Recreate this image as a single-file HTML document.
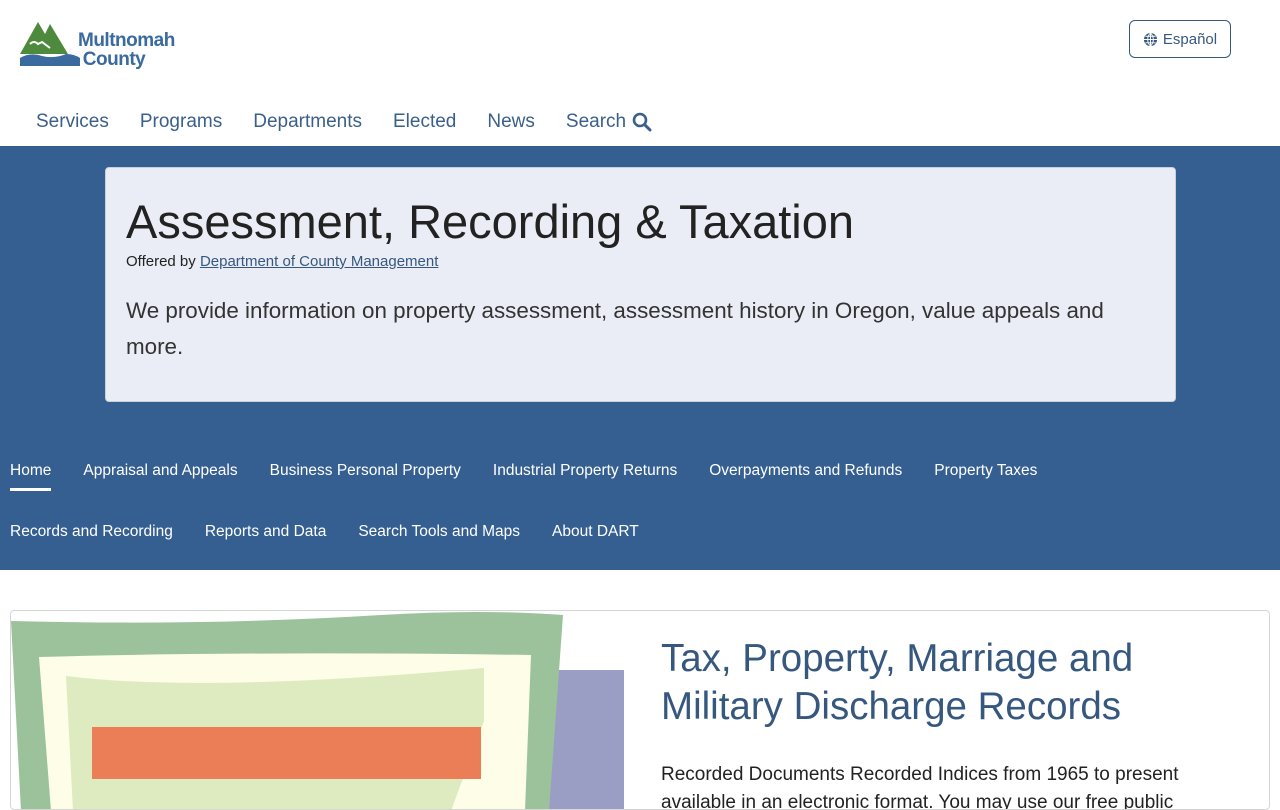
<!DOCTYPE html>
<html><head><meta charset="utf-8"><style>
*{box-sizing:border-box;margin:0;padding:0}
body{width:1280px;height:800px;overflow:hidden;font-family:"Liberation Sans",sans-serif;background:#fff;color:#222}
.top{position:relative;height:146px}
.logo{position:absolute;left:20px;top:20px}
.logo .t{position:absolute;left:58px;top:11px;color:#3a6a9e;font-weight:bold;font-size:19px;line-height:19px;letter-spacing:-0.5px}
.esp{position:absolute;left:1129px;top:20px;width:102px;height:38px;border:1px solid #36587f;border-radius:6px;color:#36587f;font-size:15px;display:flex;align-items:center;justify-content:center;gap:5px}
.nav{position:absolute;left:36px;top:111px;display:flex;font-size:19px;color:#3a5f8a}
.nav span{margin-right:31px}
.banner{background:#355f91;height:424px;position:relative}
.panel{position:absolute;left:105px;top:21px;width:1071px;height:235px;background:#eaedf5;border:1px solid #c9d0dc;border-radius:4px;padding:26px 20px}
.panel h1{font-weight:normal;font-size:47px;color:#222;line-height:56px}
.panel .off{font-size:15px;margin-top:3px}
.panel .off a{color:#36587f}
.panel p{font-size:22.4px;line-height:36px;margin-top:23px;color:#333}
.sub{position:absolute;left:10px;color:#fff;font-size:15.5px;display:flex}
.sub span{margin-right:32px}
.home{border-bottom:3px solid #fff;padding-bottom:8px}
.card{position:absolute;left:10px;top:610px;width:1260px;height:200px;border:1px solid #d5d5d5;border-radius:4px;overflow:hidden}
.card h2{position:absolute;left:650px;top:24px;font-weight:normal;font-size:38.5px;line-height:48px;color:#36587f}
.card p{position:absolute;left:650px;top:150px;font-size:19px;line-height:28px;color:#222;width:580px}
</style></head><body>
<div class="top">
 <div class="logo">
  <svg width="62" height="48" viewBox="0 0 62 48">
   <path d="M0 34 L18 2 L25 14 L30 4 L48 34 Z" fill="#4e8a3d"/>
   <path d="M10 24 Q14 20 18 24 L22 22 L30 28" stroke="#fff" stroke-width="2" fill="none"/>
   <path d="M0 38 Q10 32 22 36 Q34 39 46 34 Q54 34 60 38 L60 46 L0 46 Z" fill="#3a6a9e"/>
  </svg>
  <div class="t">Multnomah<br>&nbsp;County</div>
 </div>
 <div class="esp"><svg width="15" height="15" viewBox="0 0 16 16"><circle cx="8" cy="8" r="7" fill="#36587f"/><path d="M1 8h14M8 1v14M8 1c-4 4-4 10 0 14M8 1c4 4 4 10 0 14M2.5 4.5h11M2.5 11.5h11" stroke="#fff" stroke-width="1" fill="none"/></svg>Español</div>
 <div class="nav"><span>Services</span><span>Programs</span><span>Departments</span><span>Elected</span><span>News</span><span style="display:flex;align-items:center;gap:6px">Search <svg width="20" height="20" viewBox="0 0 20 20"><circle cx="8" cy="8" r="6" stroke="#3a5f8a" stroke-width="2.6" fill="none"/><path d="M12.5 12.5L18 18" stroke="#3a5f8a" stroke-width="3" stroke-linecap="round"/></svg></span></div>
</div>
<div class="banner">
 <div class="panel">
  <h1>Assessment, Recording &amp; Taxation</h1>
  <div class="off">Offered by <a href="#">Department of County Management</a></div>
  <p>We provide information on property assessment, assessment history in Oregon, value appeals and more.</p>
 </div>
 <div class="sub" style="top:316px"><span class="home">Home</span><span>Appraisal and Appeals</span><span>Business Personal Property</span><span>Industrial Property Returns</span><span>Overpayments and Refunds</span><span>Property Taxes</span></div>
 <div class="sub" style="top:377px"><span>Records and Recording</span><span>Reports and Data</span><span>Search Tools and Maps</span><span>About DART</span></div>
</div>
<div class="card">
 <svg width="640" height="200" style="position:absolute;left:0;top:0" viewBox="10 610 640 200">
  <rect x="547" y="669" width="76" height="140" fill="#9b9ec4"/>
  <path d="M10 620 Q200 625 380 614 Q480 608 562 614 L548 810 L20 810 Z" fill="#9bc29b"/>
  <path d="M38 656 Q250 650 530 654 L524 810 L50 810 Z" fill="#fdfde8"/>
  <path d="M65 675 Q200 692 483 667 L483 720 L450 810 L72 810 Z" fill="#deebc0"/>
  <rect x="91" y="726" width="389" height="52" fill="#ec7e57"/>
 </svg>
 <h2>Tax, Property, Marriage and<br>Military Discharge Records</h2>
 <p>Recorded Documents Recorded Indices from 1965 to present available in an electronic format. You may use our free public</p>
</div>
</body></html>
